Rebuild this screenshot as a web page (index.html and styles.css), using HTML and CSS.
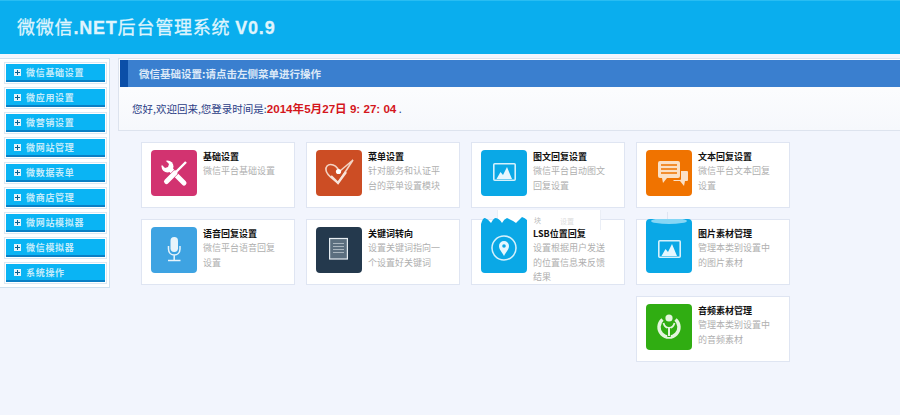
FILE: index.html
```html
<!DOCTYPE html>
<html lang="zh-CN">
<head>
    <meta charset="UTF-8">
    <title>微微信.NET后台管理系统</title>
    <link rel="stylesheet" href="styles.css">
</head>
<body>
    <div class="header">
        <h1 class="logo">微微信<b>.NET</b>后台管理系统 <b class="version">V0.9</b></h1>
    </div>

    <div class="wrap">
        <div class="sidebar">
            <div class="menu-box"><div class="menu-item"><span class="plus"></span>微信基础设置</div></div>
            <div class="menu-box"><div class="menu-item"><span class="plus"></span>微应用设置</div></div>
            <div class="menu-box"><div class="menu-item"><span class="plus"></span>微营销设置</div></div>
            <div class="menu-box"><div class="menu-item"><span class="plus"></span>微网站管理</div></div>
            <div class="menu-box"><div class="menu-item"><span class="plus"></span>微数据表单</div></div>
            <div class="menu-box"><div class="menu-item"><span class="plus"></span>微商店管理</div></div>
            <div class="menu-box"><div class="menu-item"><span class="plus"></span>微网站模拟器</div></div>
            <div class="menu-box"><div class="menu-item"><span class="plus"></span>微信模拟器</div></div>
            <div class="menu-box"><div class="menu-item"><span class="plus"></span>系统操作</div></div>
        </div>

        <div class="main">
            <div class="panel">
                <div class="panel-title">微信基础设置:请点击左侧菜单进行操作</div>
                <div class="welcome">您好,欢迎回来,您登录时间是:<b class="time">2014年5月27日 9: 27: 04</b> .</div>
            </div>

            <div class="cards">
                <div class="card">
                    <div class="icon pink">
                        <svg viewBox="0 0 46 46">
                            <path d="M20 20L33 33" stroke="#fff" stroke-width="5" stroke-linecap="round"/>
                            <circle cx="16.500" cy="16.500" r="6" fill="#fff"/>
                            <path d="M13 9l5 5-1 3-3 1-5-5z" fill="#d23370"/>
                            <path d="M36 11L15 32" stroke="#d23370" stroke-width="6"/>
                            <path d="M35 12L25 22" stroke="#fff" stroke-width="2.400"/>
                            <path d="M24 23L15.500 31.500" stroke="#fff" stroke-width="5" stroke-linecap="round"/>
                        </svg>
                    </div>
                    <div class="text"><h3>基础设置</h3><p>微信平台基础设置</p></div>
                </div>
                <div class="card">
                    <div class="icon rust">
                        <svg viewBox="0 0 46 46">
                            <path d="M23 21C19 12 9 13 10 20c0 5 7 9 12 13L37 10 24 21" fill="none" stroke="#f3d3c3" stroke-width="1.600"/>
                            <path d="M15 26l7 7 8-11" fill="none" stroke="#f8e3d9" stroke-width="2.400"/>
                            <circle cx="22.500" cy="21.500" r="2.600" fill="#fff"/>
                        </svg>
                    </div>
                    <div class="text"><h3>菜单设置</h3><p>针对服务和认证平台的菜单设置模块</p></div>
                </div>
                <div class="card">
                    <div class="icon sky">
                        <svg viewBox="0 0 46 46">
                            <rect x="12.800" y="13.800" width="21.400" height="16.400" rx="1" fill="none" stroke="#d5f1fc" stroke-width="1.600"/>
                            <path d="M15.500 29l4-7 2.500 3 4-8 5 12z" fill="#e6f7fe"/>
                        </svg>
                    </div>
                    <div class="text"><h3>图文回复设置</h3><p>微信平台自动图文回复设置</p></div>
                </div>
                <div class="card">
                    <div class="icon orange">
                        <svg viewBox="0 0 46 46">
                            <path d="M14 11h18a2 2 0 0 1 2 2v13a2 2 0 0 1-2 2H21l-4 5-1-5h-2a2 2 0 0 1-2-2V13a2 2 0 0 1 2-2z" fill="#fbe0c6"/>
                            <path d="M15 15h16M15 19h16M15 23h16" stroke="#f07300" stroke-width="1.400"/>
                            <path d="M35 21h6a1 1 0 0 1 1 1v8a1 1 0 0 1-1 1h-2l-1 5-4-5h-7l1-1h6a1 1 0 0 0 1-1z" fill="#fbe0c6"/>
                        </svg>
                    </div>
                    <div class="text"><h3>文本回复设置</h3><p>微信平台文本回复设置</p></div>
                </div>

                <div class="card">
                    <div class="icon blue">
                        <svg viewBox="0 0 46 46">
                            <rect x="19.500" y="10" width="7.500" height="15" rx="3.700" fill="#e8f4fb"/>
                            <path d="M17.500 19v3c0 8 11.500 8 11.500 0v-3M23.200 28.500v4.500M17 33.500h12.500" fill="none" stroke="#e8f4fb" stroke-width="1.500"/>
                        </svg>
                    </div>
                    <div class="text"><h3>语音回复设置</h3><p>微信平台语音回复设置</p></div>
                </div>
                <div class="card">
                    <div class="icon navy">
                        <svg viewBox="0 0 46 46">
                            <rect x="13.600" y="11.500" width="17.800" height="20.500" fill="#5c6f7f" stroke="#e6edf2" stroke-width="1.200"/>
                            <path d="M17 16.500h11M17 19.500h11M17 22.500h11M17 25.500h11" stroke="#aab6bf" stroke-width="1.200"/>
                        </svg>
                    </div>
                    <div class="text"><h3>关键词转向</h3><p>设置关键词指向一个设置好关键词</p></div>
                </div>
                <div class="card">
                    <div class="patch">
                        <span class="ghost-a">块</span>
                        <span class="ghost-b">设置</span>
                    </div>
                    <div class="icon torn">
                        <svg viewBox="0 0 46 56">
                            <path d="M0 7Q2 0 4 1Q7 2 10 6Q12 2 14 1Q18 1 21 6Q23 2 26 1Q31 3 35 6Q38 3 41 0Q44 1 46 3V52a4 4 0 0 1-4 4H4a4 4 0 0 1-4-4z" fill="#0aa8e6"/>
                            <circle cx="23" cy="31" r="12" fill="none" stroke="#d5f1fc" stroke-width="1.600"/>
                            <path d="M23 39c-2-4-5-6.500-5-10a5 5 0 0 1 10 0c0 3.500-3 6-5 10z" fill="#e6f7fe"/>
                            <circle cx="23" cy="29" r="1.800" fill="#0aa8e6"/>
                        </svg>
                    </div>
                    <div class="text"><h3>LSB位置回复</h3><p>设置根据用户发送的位置信息来反馈结果</p></div>
                </div>
                <div class="card">
                    <span class="tick"></span>
                    <div class="icon tall">
                        <svg viewBox="0 0 46 54">
                            <ellipse cx="23" cy="2" rx="18" ry="3" fill="#86d6f5"/>
                            <rect x="12.800" y="21.800" width="21.400" height="16.400" rx="1" fill="none" stroke="#d5f1fc" stroke-width="1.600"/>
                            <path d="M15.500 37l4-7 2.500 3 4-8 5 12z" fill="#e6f7fe"/>
                        </svg>
                    </div>
                    <div class="text"><h3>图片素材管理</h3><p>管理本类别设置中的图片素材</p></div>
                </div>

                <div class="card last">
                    <div class="icon green">
                        <svg viewBox="0 0 46 46">
                            <circle cx="23" cy="14" r="3.600" fill="#e4f5de"/>
                            <path d="M16.500 15.500a10 10 0 1 0 13 0" fill="none" stroke="#e4f5de" stroke-width="3.400"/>
                            <path d="M17.500 19c1 3.500 3.500 5 5.500 5s4.500-1.500 5.500-5" fill="none" stroke="#e4f5de" stroke-width="1.800"/>
                            <path d="M23 24v9" stroke="#30ad12" stroke-width="3.500"/>
                            <path d="M23 24v8" stroke="#e4f5de" stroke-width="2"/>
                        </svg>
                    </div>
                    <div class="text"><h3>音频素材管理</h3><p>管理本类别设置中的音频素材</p></div>
                </div>
            </div>
        </div>
    </div>
</body>
</html>
```

FILE: styles.css
```css
body {
    margin: 0;
    background: #f2f5fd;
    font-family: "Noto Sans CJK SC", "Liberation Sans", sans-serif;
    height: 415px;
    overflow: hidden;
}

.header {
    height: 54px;
    background: #0aaeee;
    border-top: 1px solid #29bdf2;
    box-sizing: border-box;
    display: flex;
    align-items: center;
    padding: 0 0 3px 17px;
}
.logo {
    margin: 0;
    font-family: "Noto Sans CJK SC", sans-serif;
    font-size: 18px;
    font-weight: 400;
    letter-spacing: 0.8px;
    color: #dff4fd;
    white-space: pre;
    -webkit-text-stroke: 0.3px #dff4fd;
}
.logo b {
    font-family: "Liberation Sans", sans-serif;
    font-weight: 700;
}
.version {
    margin-left: 0;
}

.wrap {
    display: flex;
    align-items: flex-start;
    padding-top: 4px;
}

.sidebar {
    width: 110px;
    box-sizing: border-box;
    background: #fff;
    border: 1px solid #cfe0ee;
    border-left: none;
    padding: 3px 2px 3px 4px;
}
.menu-box {
    border: 1px solid #dbe8f3;
    padding: 1px;
    margin-bottom: 3px;
}
.menu-box:last-child {
    margin-bottom: 0;
}
.menu-item {
    height: 16px;
    background: #0ab4f4;
    border-bottom: 2px solid #0a7fc4;
    display: flex;
    align-items: center;
    font-size: 9px;
    font-weight: 700;
    letter-spacing: 0.7px;
    color: #c4ecfb;
}
.plus {
    width: 7px;
    height: 7px;
    margin: 0 5px 0 8px;
    background:
        linear-gradient(#0b5f8f, #0b5f8f) center / 5px 1px no-repeat,
        linear-gradient(#0b5f8f, #0b5f8f) center / 1px 5px no-repeat,
        #e8f4fa;
}

.main {
    flex: 1;
    margin-left: 8px;
}
.panel {
    background: linear-gradient(#fff, #f6f8fc);
    border: 1px solid #dde3ee;
    border-right: none;
    padding: 1px 0 0 1px;
    height: 70px;
}
.panel-title {
    height: 27px;
    line-height: 27px;
    background: #3a7fcf;
    border-left: 8px solid #0b4fa8;
    padding-left: 11px;
    font-size: 10.500px;
    font-weight: 700;
    color: #dce9f8;
}
.welcome {
    padding: 13px 0 0 12px;
    font-size: 10.500px;
    color: #2b3d86;
}
.time {
    font-family: "Liberation Sans", "Noto Sans CJK SC", sans-serif;
    font-size: 11.600px;
    color: #d4161c;
}

.cards {
    display: grid;
    grid-template-columns: repeat(4, 154px);
    grid-auto-rows: 66px;
    gap: 11px;
    margin: 11px 0 0 23px;
}
.card {
    box-sizing: border-box;
    position: relative;
    background: #fff;
    border: 1px solid #dfe5f2;
    display: flex;
    padding: 7px 4px 0 9px;
}
.card.last {
    grid-column: 4;
}
.icon {
    flex: none;
    position: relative;
    width: 46px;
    height: 46px;
    border-radius: 4px;
    margin-right: 6px;
}
.icon svg {
    display: block;
    width: 100%;
    height: 100%;
}
.pink { background: #d23370; }
.rust { background: #cc4d24; }
.sky { background: #0aa8e6; }
.orange { background: #f07300; }
.blue { background: #3ea3e2; }
.navy { background: #24394d; }
.green { background: #30ad12; }
.tall {
    background: #0aa8e6;
    height: 54px;
    margin-top: -8px;
}
.torn {
    height: 56px;
    margin-top: -10px;
}

/* torn white scrap lying over the LSB card */
.patch {
    position: absolute;
    left: 25px;
    top: -10px;
    width: 102px;
    height: 20px;
    background: #fff;
    border: 1px solid #eaeef6;
    border-width: 0 1px;
}
.ghost-a,
.ghost-b {
    position: absolute;
    font-size: 7px;
    line-height: 8px;
}
.ghost-a {
    left: 36px;
    top: 6px;
    color: #bbb;
}
.ghost-b {
    left: 62px;
    top: 7px;
    color: #ddd;
}
.tick {
    position: absolute;
    left: 30px;
    top: -8px;
    width: 1px;
    height: 8px;
    background: #dfe5f2;
}

.text {
    position: relative;
}
.text h3 {
    margin: 0;
    font-size: 9px;
    line-height: 14px;
    color: #111;
}
.text p {
    margin: 0;
    width: 74px;
    font-size: 9px;
    line-height: 14.500px;
    color: #afafaf;
}
```
